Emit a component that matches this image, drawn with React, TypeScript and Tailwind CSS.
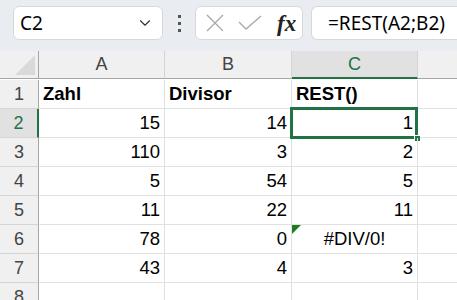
import { ChevronDown } from "lucide-react";

const rows = [
  { a: "15", b: "14", c: "1" },
  { a: "110", b: "3", c: "2" },
  { a: "5", b: "54", c: "5" },
  { a: "11", b: "22", c: "11" },
  { a: "78", b: "0", c: "#DIV/0!" },
  { a: "43", b: "4", c: "3" },
];

const cellFont = { fontFamily: '"Liberation Sans", Arial, sans-serif' };

export default function App() {
  return (
    <div className="w-[457px] h-[300px] overflow-hidden bg-white" style={{ fontFamily: '"Noto Sans", sans-serif' }}>
      {/* Formula bar */}
      <div className="h-[51px] bg-[#e9ecf0] flex items-start pt-[6px] pl-[13px] border-b border-[#e9ecf0]">
        <div className="w-[150px] h-[34px] bg-white border border-[#d6d8dc] rounded-[6px] flex items-center pl-[6px] pr-[8px] justify-between">
          <span className="text-[19px] text-black leading-none">C2</span>
          <ChevronDown size={18} strokeWidth={1.5} className="text-[#333]" />
        </div>
        <div className="w-[32px] h-[34px] flex flex-col items-center justify-center gap-[4px]">
          <span className="w-[3px] h-[3px] bg-[#555]" />
          <span className="w-[3px] h-[3px] bg-[#555]" />
          <span className="w-[3px] h-[3px] bg-[#555]" />
        </div>
        <div className="w-[108px] h-[34px] bg-white border border-[#d6d8dc] rounded-[6px] flex items-center pl-[10px] gap-[14px]">
          <svg width="18" height="18" viewBox="0 0 18 18">
            <path d="M1 1 L17 17 M17 1 L1 17" stroke="#a8a8a8" strokeWidth="1.3" fill="none" />
          </svg>
          <svg width="24" height="16" viewBox="0 0 24 16">
            <path d="M1 7 L8 14 L23 1" stroke="#a8a8a8" strokeWidth="1.3" fill="none" />
          </svg>
          <span className="italic font-bold text-[23px] leading-none text-[#222] ml-[1px]" style={{ fontFamily: '"Liberation Serif", serif' }}>
            fx
          </span>
        </div>
        <div className="ml-[8px] flex-1 h-[34px] bg-white border border-r-0 border-[#d6d8dc] rounded-l-[6px] flex items-center pl-[16px]">
          <span className="text-[19px] text-black leading-none">=REST(A2;B2)</span>
        </div>
      </div>

      {/* Grid */}
      <div className="grid grid-cols-[39px_126px_127px_126px_1fr] auto-rows-[29px]" style={cellFont}>
        {/* header row */}
        <div className="h-[28px] bg-[#f0f0f0] border-b border-r border-[#a6a6a6] relative">
          <svg className="absolute right-[3px] bottom-[3px]" width="20" height="20" viewBox="0 0 20 20">
            <path d="M20 0 L20 20 L0 20 Z" fill="#d9d9d9" />
          </svg>
        </div>
        <div className="h-[28px] bg-[#f0f0f0] border-b border-r border-b-[#a6a6a6] border-r-[#d4d4d4] flex items-center justify-center text-[18px] text-[#444]">A</div>
        <div className="h-[28px] bg-[#f0f0f0] border-b border-r border-b-[#a6a6a6] border-r-[#d4d4d4] flex items-center justify-center text-[18px] text-[#444]">B</div>
        <div className="h-[28px] bg-[#e1e1e1] border-b-2 border-r border-b-[#217346] border-r-[#d4d4d4] flex items-center justify-center text-[18px] text-[#217346]">C</div>
        <div className="h-[28px] bg-[#f0f0f0] border-b border-b-[#a6a6a6]" />

        {/* row 1 */}
        <div className="bg-[#f0f0f0] border-r border-b border-r-[#a6a6a6] border-b-[#d4d4d4] flex items-center justify-center text-[18px] text-[#444]">1</div>
        <div className="border-r border-b border-[#e1e1e1] flex items-center px-[4px] text-[18.5px] font-bold text-black">Zahl</div>
        <div className="border-r border-b border-[#e1e1e1] flex items-center px-[4px] text-[18.5px] font-bold text-black">Divisor</div>
        <div className="border-r border-b border-[#e1e1e1] flex items-center px-[4px] text-[18.5px] font-bold text-black">REST()</div>
        <div className="border-b border-[#e1e1e1]" />

        {rows.map((r, i) => {
          const n = i + 2;
          const sel = n === 2;
          const err = r.c.startsWith("#");
          return [
            <div
              key={`h${n}`}
              className={
                sel
                  ? "bg-[#e1e1e1] border-r-2 border-b border-r-[#217346] border-b-[#d4d4d4] flex items-center justify-center text-[18px] text-[#217346]"
                  : "bg-[#f0f0f0] border-r border-b border-r-[#a6a6a6] border-b-[#d4d4d4] flex items-center justify-center text-[18px] text-[#444]"
              }
            >
              {n}
            </div>,
            <div key={`a${n}`} className="border-r border-b border-[#e1e1e1] flex items-center justify-end px-[4px] text-[18.5px] text-black">
              {r.a}
            </div>,
            <div key={`b${n}`} className="border-r border-b border-[#e1e1e1] flex items-center justify-end px-[4px] text-[18.5px] text-black">
              {r.b}
            </div>,
            <div
              key={`c${n}`}
              className={`relative border-r border-b border-[#e1e1e1] flex items-center px-[4px] text-[18.5px] text-black ${err ? "justify-center" : "justify-end"}`}
            >
              {err && (
                <svg className="absolute left-0 top-0" width="9" height="9" viewBox="0 0 9 9">
                  <path d="M0 0 L9 0 L0 9 Z" fill="#1e7d1e" />
                </svg>
              )}
              {sel && (
                <>
                  <div className="absolute left-[-2px] top-[-2px] right-[-1px] bottom-[-2px] border-[3px] border-[#217346] pointer-events-none" />
                  <div className="absolute right-[-4px] bottom-[-5px] w-[7px] h-[7px] bg-[#217346] border border-white" />
                </>
              )}
              <span className="relative">{r.c}</span>
            </div>,
            <div key={`d${n}`} className="border-b border-[#e1e1e1]" />,
          ];
        })}

        {/* row 8 */}
        <div className="bg-[#f0f0f0] border-r border-r-[#a6a6a6] flex items-center justify-center text-[18px] text-[#444]">8</div>
        <div className="border-r border-[#e1e1e1]" />
        <div className="border-r border-[#e1e1e1]" />
        <div className="border-r border-[#e1e1e1]" />
        <div />
      </div>
    </div>
  );
}
